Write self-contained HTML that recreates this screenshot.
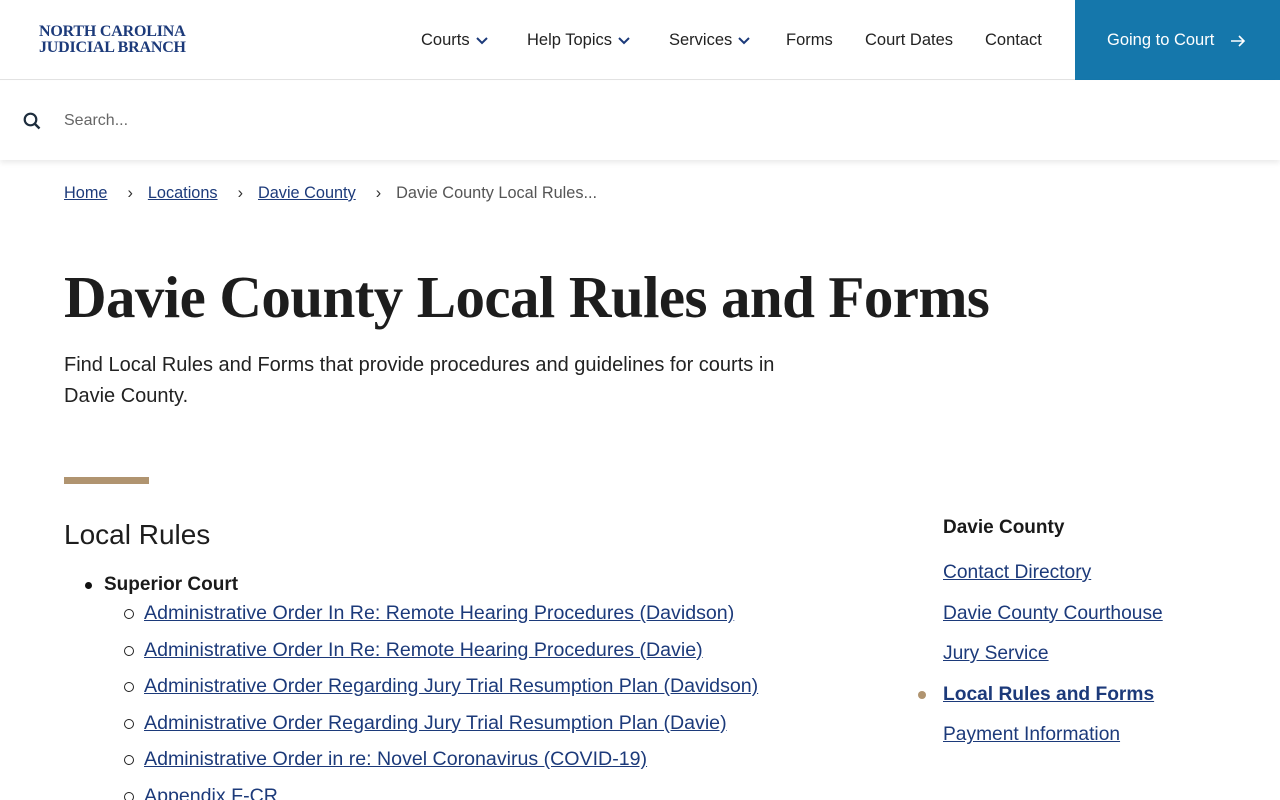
<!DOCTYPE html>
<html><head><meta charset="utf-8"><style>
*{margin:0;padding:0;box-sizing:border-box}
html,body{width:1280px;height:800px;overflow:hidden}
body{background:#fff;font-family:"Liberation Sans",sans-serif;color:#1a1a1a;position:relative}
.hdr{position:absolute;top:0;left:0;width:1280px;height:80px;border-bottom:1px solid #e2e2e2}
.logo{position:absolute;left:39px;top:24px;font-family:"Liberation Serif",serif;font-weight:bold;color:#1c3a7a;font-size:16px;line-height:16px;letter-spacing:-0.2px}
.nav{position:absolute;top:31px;font-size:16.5px;color:#222;line-height:18px}
.nav svg{vertical-align:middle;margin-left:6px}
.btn{position:absolute;left:1075px;top:0;width:205px;height:80px;background:#1577ab;color:#fff;font-size:16.5px;padding:31px 0 0 32px;line-height:18px}
.search{position:absolute;top:81px;left:0;width:1280px;height:79px;box-shadow:0 3px 5px rgba(0,0,0,.08)}
.search span{position:absolute;left:64px;top:31px;color:#666;font-size:16px;line-height:18px}
.bc{position:absolute;top:184px;left:64px;font-size:16.3px;color:#555;line-height:18px}
.bc a{color:#1c3a7a;text-decoration:underline}
.bc i{font-style:normal;margin:0 15px 0 20px;color:#333}
h1{position:absolute;left:64px;top:264px;font-family:"Liberation Serif",serif;font-size:59px;line-height:66px;font-weight:bold;color:#1d1d1d;letter-spacing:-0.6px;white-space:nowrap}
.lead{position:absolute;left:64px;top:350px;font-size:20px;line-height:31px;width:740px;color:#222}
.bar{position:absolute;left:64px;top:477px;width:85px;height:7px;background:#b09470}
h2{position:absolute;left:64px;top:518px;font-size:28px;line-height:34px;font-weight:normal;color:#1d1d1d}
ul.m{position:absolute;left:104px;top:571px;font-size:19.6px;list-style:none;line-height:28px}
ul.m>li>b{display:block;height:28px;font-weight:bold;position:relative;font-size:19px}
ul.m>li>b:before{content:"";position:absolute;left:-19px;top:11px;width:7px;height:7px;border-radius:50%;background:#111}
ul.s{list-style:none;margin-left:40px}
ul.s li{height:36.6px;position:relative}
ul.s li:before{content:"";position:absolute;left:-20px;top:10px;width:8px;height:8px;border-radius:50%;border:1.3px solid #222}
a{color:#1c3a7a;text-decoration:underline}
.side{position:absolute;left:943px;top:515px;font-size:19.2px;line-height:26px}
.side .t{font-weight:bold;font-size:19px;height:45px}
.side div{height:40.6px}
.dot{position:absolute;left:918px;top:691px;width:8px;height:8px;border-radius:50%;background:#b09470}
</style></head><body>
<div class="hdr">
<div class="logo">NORTH CAROLINA<br>JUDICIAL BRANCH</div>
<div class="nav" style="left:421px">Courts<svg width="12" height="8"><path d="M1 1l5 5 5-5" stroke="#1c3a7a" stroke-width="2" fill="none"/></svg></div>
<div class="nav" style="left:527px">Help Topics<svg width="12" height="8"><path d="M1 1l5 5 5-5" stroke="#1c3a7a" stroke-width="2" fill="none"/></svg></div>
<div class="nav" style="left:669px">Services<svg width="12" height="8"><path d="M1 1l5 5 5-5" stroke="#1c3a7a" stroke-width="2" fill="none"/></svg></div>
<div class="nav" style="left:786px">Forms</div>
<div class="nav" style="left:865px">Court Dates</div>
<div class="nav" style="left:985px">Contact</div>
<div class="btn">Going to Court<svg width="16" height="14" style="margin-left:16px;vertical-align:middle"><path d="M1 7h13M9 2l5 5-5 5" stroke="#fff" stroke-width="1.6" fill="none"/></svg></div>
</div>
<div class="search"><svg width="18" height="18" style="position:absolute;left:23px;top:31px"><circle cx="7.5" cy="7.5" r="5.8" stroke="#1d2d3d" stroke-width="2.2" fill="none"/><path d="M12 12l4.5 4.5" stroke="#1d2d3d" stroke-width="2.4"/></svg><span>Search...</span></div>
<div class="bc"><a>Home</a><i>›</i><a>Locations</a><i>›</i><a>Davie County</a><i>›</i>Davie County Local Rules...</div>
<h1>Davie County Local Rules and Forms</h1>
<div class="lead">Find Local Rules and Forms that provide procedures and guidelines for courts in Davie County.</div>
<div class="bar"></div>
<h2>Local Rules</h2>
<ul class="m"><li><b>Superior Court</b><ul class="s">
<li><a>Administrative Order In Re: Remote Hearing Procedures (Davidson)</a></li>
<li><a>Administrative Order In Re: Remote Hearing Procedures (Davie)</a></li>
<li><a>Administrative Order Regarding Jury Trial Resumption Plan (Davidson)</a></li>
<li><a>Administrative Order Regarding Jury Trial Resumption Plan (Davie)</a></li>
<li><a>Administrative Order in re: Novel Coronavirus (COVID-19)</a></li>
<li><a>Appendix F-CR</a></li>
</ul></li></ul>
<div class="side">
<div class="t">Davie County</div>
<div><a>Contact Directory</a></div>
<div><a>Davie County Courthouse</a></div>
<div><a>Jury Service</a></div>
<div><a style="font-weight:bold">Local Rules and Forms</a></div>
<div><a>Payment Information</a></div>
</div>
<div class="dot"></div>
</body></html>
